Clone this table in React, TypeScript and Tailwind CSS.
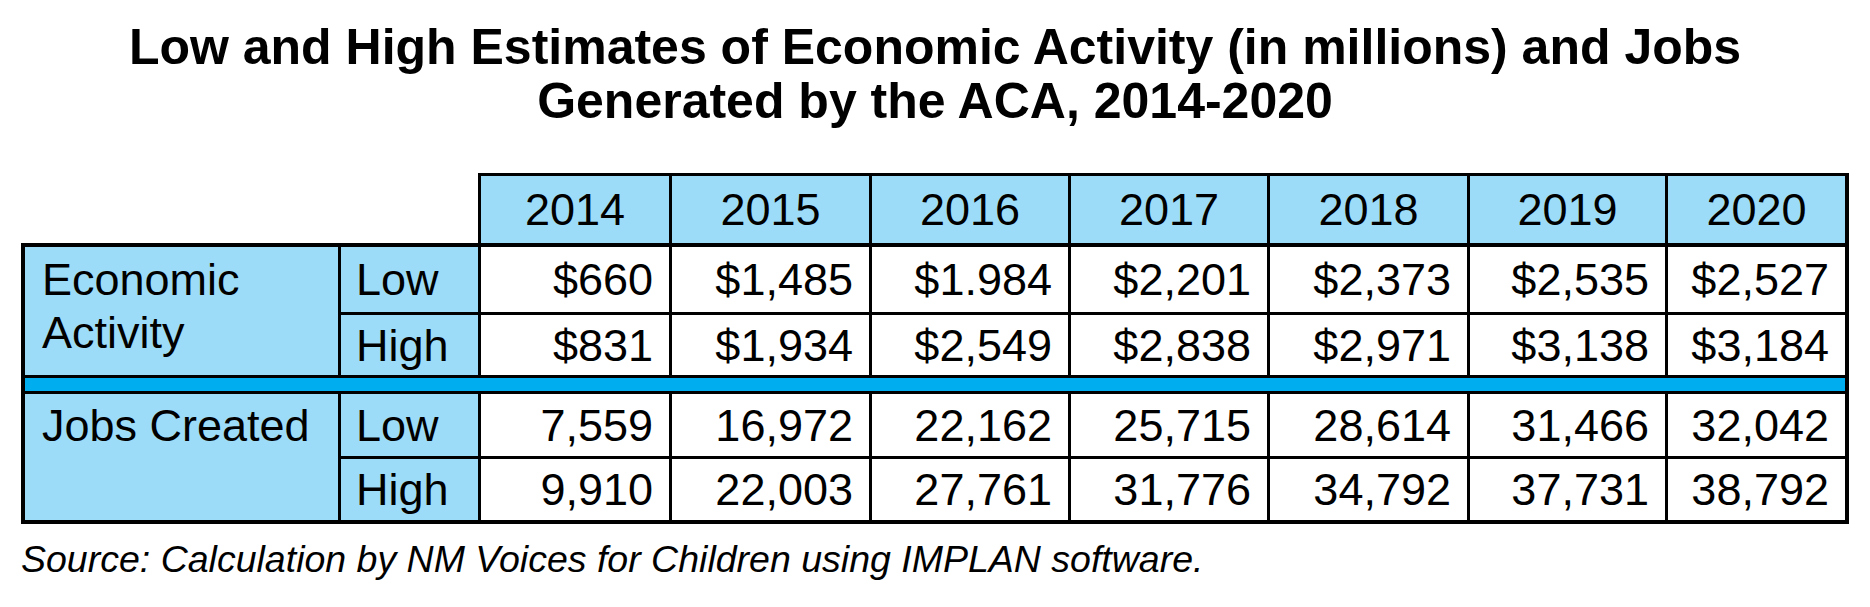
const years = ["2014", "2015", "2016", "2017", "2018", "2019", "2020"];

const econLow = ["$660", "$1,485", "$1.984", "$2,201", "$2,373", "$2,535", "$2,527"];
const econHigh = ["$831", "$1,934", "$2,549", "$2,838", "$2,971", "$3,138", "$3,184"];
const jobsLow = ["7,559", "16,972", "22,162", "25,715", "28,614", "31,466", "32,042"];
const jobsHigh = ["9,910", "22,003", "27,761", "31,776", "34,792", "37,731", "38,792"];

function ValueCell({ value }: { value: string }) {
  return <div className="bg-white flex items-center justify-end pr-[16px]">{value}</div>;
}

function LevelCell({ label }: { label: string }) {
  return <div className="bg-[#9ddcf8] flex items-center pl-[15px]">{label}</div>;
}

export default function App() {
  return (
    <div className="w-[1870px] h-[607px] bg-white text-black font-['Liberation_Sans',Arial,sans-serif]">
      <h1 className="pt-[20px] text-center text-[50px] leading-[54px] font-bold">
        Low and High Estimates of Economic Activity (in millions) and Jobs
        <br />
        Generated by the ACA, 2014-2020
      </h1>

      <div className="ml-[21px] mt-[45px] w-[1828px] text-[45px] leading-[53px]">
        {/* year header */}
        <div className="ml-[457px] grid grid-cols-[188px_197px_196px_196px_197px_195px_177px] gap-[3px] bg-black pl-[3px] pr-[4px] pt-[3px]">
          {years.map((y) => (
            <div key={y} className="h-[67px] bg-[#9ddcf8] flex items-center justify-center">
              {y}
            </div>
          ))}
        </div>

        {/* body */}
        <div className="grid grid-cols-[313px_137px_188px_197px_196px_196px_197px_195px_177px] grid-rows-[65px_60px_13px_62px_61px] gap-[3px] bg-black p-[4px]">
          <div className="row-span-2 bg-[#9ddcf8] pl-[17px] pt-[6px]">
            Economic
            <br />
            Activity
          </div>
          <LevelCell label="Low" />
          {econLow.map((v, i) => (
            <ValueCell key={i} value={v} />
          ))}
          <LevelCell label="High" />
          {econHigh.map((v, i) => (
            <ValueCell key={i} value={v} />
          ))}

          <div className="col-span-9 bg-[#00aeef]" />

          <div className="row-span-2 bg-[#9ddcf8] pl-[17px] pt-[5px]">Jobs Created</div>
          <LevelCell label="Low" />
          {jobsLow.map((v, i) => (
            <ValueCell key={i} value={v} />
          ))}
          <LevelCell label="High" />
          {jobsHigh.map((v, i) => (
            <ValueCell key={i} value={v} />
          ))}
        </div>

        <p className="mt-[14px] text-[37.5px] leading-[42px] italic">
          Source: Calculation by NM Voices for Children using IMPLAN software.
        </p>
      </div>
    </div>
  );
}
